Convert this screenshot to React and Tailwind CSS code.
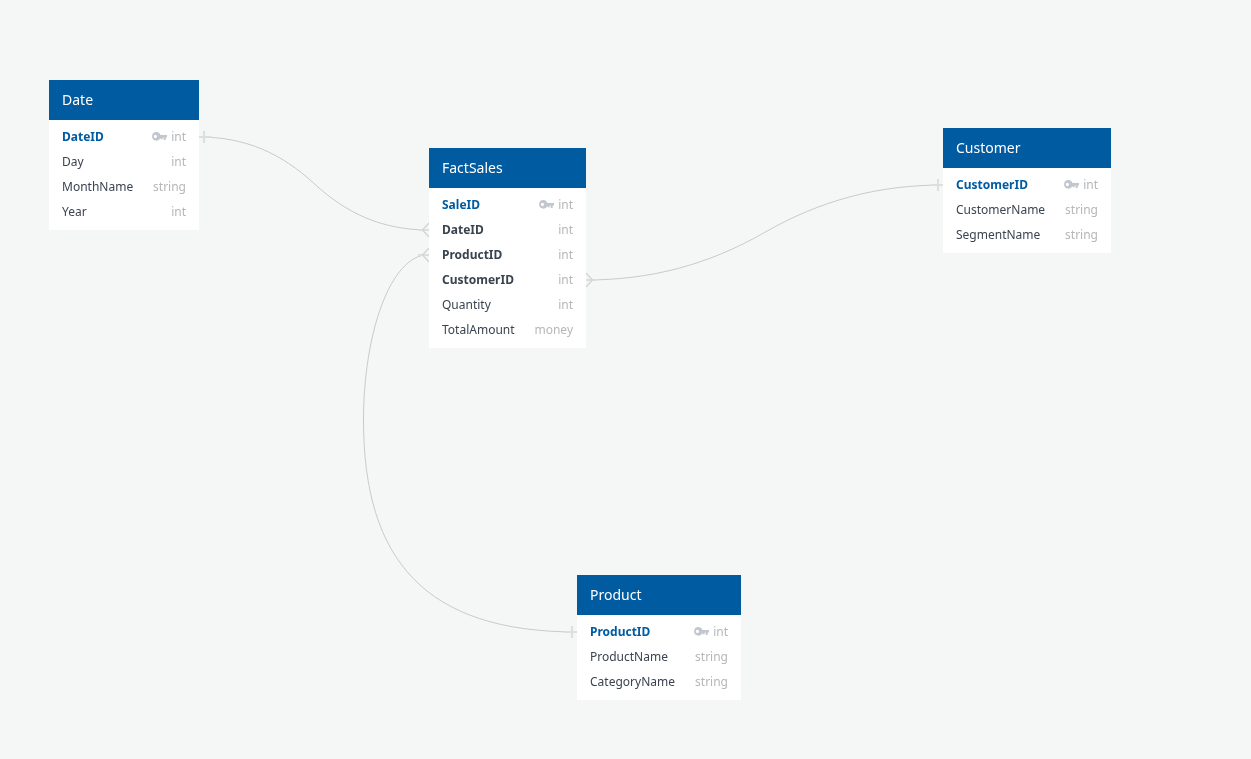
const tables = [
  { name: "Date", pos: "left-[49px] top-[80px] w-[150px]", rows: [["DateID", "int", "pk"], ["Day", "int"], ["MonthName", "string"], ["Year", "int"]] },
  { name: "FactSales", pos: "left-[429px] top-[148px] w-[157px]", rows: [["SaleID", "int", "pk"], ["DateID", "int", "fk"], ["ProductID", "int", "fk"], ["CustomerID", "int", "fk"], ["Quantity", "int"], ["TotalAmount", "money"]] },
  { name: "Customer", pos: "left-[943px] top-[128px] w-[168px]", rows: [["CustomerID", "int", "pk"], ["CustomerName", "string"], ["SegmentName", "string"]] },
  { name: "Product", pos: "left-[577px] top-[575px] w-[164px]", rows: [["ProductID", "int", "pk"], ["ProductName", "string"], ["CategoryName", "string"]] },
];

function Key() {
  return (
    <svg width="15" height="9" viewBox="0 0 15 9" className="mr-[4px] mb-[1px] shrink-0" fill="#c2c6cd">
      <path fillRule="evenodd" d="M4.300 0a4.300 4.300 0 0 1 4.100 3H15v2.600h-1.300V8h-2V5.600h-1V7.200H8.500V5.600A4.300 4.300 0 1 1 4.300 0zM3.400 2.800a1.600 1.600 0 1 0 0 3.200 1.600 1.600 0 0 0 0-3.200z" />
    </svg>
  );
}

function Table({ t }) {
  return (
    <div className={`absolute ${t.pos} bg-white`}>
      <div className="h-10 bg-[#005ba1] px-[13px] pb-[2px] flex items-center text-white text-[14px]">{t.name}</div>
      <div className="py-[5px]">
        {t.rows.map(([n, type, flag]) => (
          <div key={n} className="h-[25px] px-[13px] pb-[2px] flex items-center justify-between text-[12px]">
            <span className={flag === "pk" ? "font-bold text-[#005ba1]" : flag === "fk" ? "font-bold text-[#3a4350]" : "text-[#3a4350]"}>{n}</span>
            <span className="flex items-center text-[#b5b7ba]">
              {flag === "pk" && <Key />}
              {type}
            </span>
          </div>
        ))}
      </div>
    </div>
  );
}

export default function App() {
  return (
    <div className="relative w-[1251px] h-[759px] overflow-hidden bg-[#f5f7f6] font-['Noto_Sans',sans-serif]">
      <svg className="absolute left-0 top-0" width="1251" height="759" fill="none" stroke="#c9cbca" strokeWidth="1">
        <path d="M199 137C245 137 281 153 314 183.500C347 214 383 230 429 230" />
        <path d="M586 280C650 280 708 265 764.500 232.500C821 200 879 185 943 185" />
        <path d="M577 632C425 632 363.500 560 363.500 420C363.500 335 390 254.500 429 254.500" />
        <g stroke="#dcdedf" strokeWidth="2">
          <path d="M199 137H212" />
          <path d="M930 185H943" />
          <path d="M564 632H577" />
          <path d="M418 230H429" />
          <path d="M418 255H429" />
          <path d="M586 280H597" />
          <path d="M204 131V143" />
          <path d="M938 179V191" />
          <path d="M572 626V638" />
        </g>
        <g stroke="#d2d4d4" strokeWidth="1.300">
          <path d="M429 223L422.500 230L429 237" />
          <path d="M429 248L422.500 255L429 262" />
          <path d="M586 273L592.500 280L586 287" />
        </g>
      </svg>
      <div className="absolute inset-0 will-change-transform">
        {tables.map((t) => <Table key={t.name} t={t} />)}
      </div>
    </div>
  );
}
